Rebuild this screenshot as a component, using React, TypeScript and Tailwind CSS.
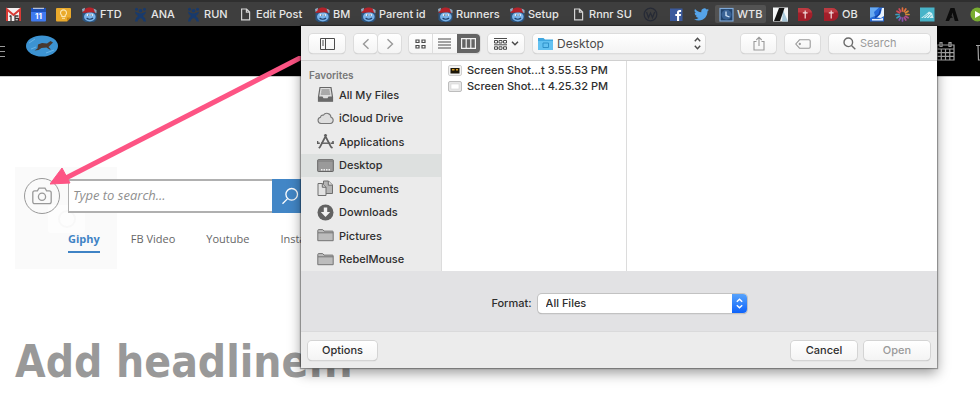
import type { ReactNode } from "react";

type Bookmark = {
    id: string;
    label?: string;
    width: string;
    icon: ReactNode;
};

const MouseIcon = () => (
    <svg width="15" height="15" viewBox="0 0 15 15">
        <path d="M.5 5.500h14v7L12 15H3.500l-3-2z" fill="#2c5580" />
        <ellipse cx="7.800" cy="9.800" rx="5.800" ry="4.600" fill="#79b3ea" />
        <path d="M.5 6C1.500 2 5 .3 8.500.5c3 .2 5 2 5.700 5.500L10 5.200 5 5.600z" fill="#b4232b" />
        <path d="M0 2L3 .8 2.500 3.500.5 5zM11.500 1.500l3 1.500V6l-1.500-.5z" fill="#8fa9bf" />
        <ellipse cx="6" cy="7.900" rx="1.300" ry="1.200" fill="#e6f1fc" />
        <ellipse cx="9.700" cy="7.900" rx="1.300" ry="1.200" fill="#e6f1fc" />
        <circle cx="6.500" cy="8" r="0.600" fill="#16263c" />
        <circle cx="9.300" cy="8" r="0.600" fill="#16263c" />
        <path d="M4.600 11c1.500 1.600 4.800 1.600 6.400 0" stroke="#1d3d68" strokeWidth="1.100" fill="none" />
    </svg>
);

const JiraIcon = () => (
    <svg width="15" height="15" viewBox="0 0 15 15" fill="#183a6c">
        <circle cx="3.500" cy="2.300" r="1.500" />
        <circle cx="11.500" cy="2.300" r="1.500" />
        <circle cx="7.500" cy="3.800" r="1.800" />
        <path d="M2 4.500c2 .8 3.500 2 5.500 2s3.500-1.200 5.500-2c-.2 2.500-1.600 3.600-3.300 4.600 1.600 1 3 2.400 3.300 5.400h-2.500c-.3-2-1.500-3-3-3.500-1.500.5-2.700 1.500-3 3.500H2c.3-3 1.700-4.400 3.300-5.400C3.600 8.100 2.200 7 2 4.500z" />
    </svg>
);

const PageIcon = () => (
    <svg width="15" height="15" viewBox="0 0 15 15" fill="none" stroke="#d4d4d4" strokeWidth="1.200">
        <path d="M3.600 2h5l3 3v7.900h-8zM8.400 2v3.200h3.200" />
    </svg>
);

const RedIcon = () => (
    <svg width="15" height="15" viewBox="0 0 15 15">
        <path d="M0 1h8a6.500 6.500 0 0 1 0 13H0z" fill="#a31f2a" />
        <path d="M0 1h8a6.500 6.500 0 0 1 6 4.500H0z" fill="#bb3a41" />
        <path d="M7.200 3.500v8M4.800 5.800h4.800" stroke="#f2dcdc" strokeWidth="1.200" />
    </svg>
);

const bookmarks: Bookmark[] = [
    {
        id: "Gmail",
        width: "w-[25px]",
        icon: (
            <svg width="15" height="15" viewBox="0 0 15 15">
                <rect y="1" width="15" height="13" rx="1" fill="#f4f0f0" />
                <path d="M1 14V2.500L7.500 8 14 2.500V14" fill="none" stroke="#d93a35" strokeWidth="2" />
                <path d="M5 8.500v6M5 8.500l-1.500 1M12.500 9H9v5h3.500v-2.500H9" stroke="#3b3333" strokeWidth="1.300" fill="none" />
            </svg>
        ),
    },
    {
        id: "Calendar",
        width: "w-[25px]",
        icon: (
            <svg width="15" height="15" viewBox="0 0 15 15">
                <rect y="1" width="15" height="13.500" rx="1" fill="#3f7af0" />
                <rect y="1" width="15" height="4" fill="#1d50b8" />
                <path d="M2 1.300h11" stroke="#d9dde5" strokeWidth="1" />
                <text x="7.500" y="12" textAnchor="middle" fontSize="8" fontWeight="700" fontFamily="Inter, sans-serif" fill="#fff">11</text>
            </svg>
        ),
    },
    {
        id: "Keep",
        width: "w-[26px]",
        icon: (
            <svg width="15" height="15" viewBox="0 0 15 15">
                <path d="M1 1h13a1 1 0 0 1 1 1v8.500L11 14.500H1a1 1 0 0 1-1-1V2a1 1 0 0 1 1-1z" fill="#eaaa2c" />
                <path d="M15 10.500h-4v4z" fill="#c98514" />
                <path d="M5.800 9.500V8.300a3 3 0 1 1 3.400 0v1.200zM6 11.200h3" fill="none" stroke="#fbe6b4" strokeWidth="1.100" />
            </svg>
        ),
    },
    { id: "ftd", label: "FTD", width: "w-[51px]", icon: <MouseIcon /> },
    { id: "ana", label: "ANA", width: "w-[53px]", icon: <JiraIcon /> },
    { id: "run", label: "RUN", width: "w-[52px]", icon: <JiraIcon /> },
    { id: "edit", label: "Edit Post", width: "w-[77px]", icon: <PageIcon /> },
    { id: "bm", label: "BM", width: "w-[46px]", icon: <MouseIcon /> },
    { id: "parent", label: "Parent id", width: "w-[77px]", icon: <MouseIcon /> },
    { id: "runners", label: "Runners", width: "w-[72px]", icon: <MouseIcon /> },
    { id: "setup", label: "Setup", width: "w-[61px]", icon: <MouseIcon /> },
    { id: "rnnr", label: "Rnnr SU", width: "w-[72px]", icon: <PageIcon /> },
    {
        id: "Workplace",
        width: "w-[26px]",
        icon: (
            <svg width="15" height="15" viewBox="0 0 15 15" fill="none" stroke="#272b36" strokeWidth="1.300">
                <circle cx="7.500" cy="7.500" r="6.300" />
                <path d="M3.500 5l2 5.500 2-4.500 2 4.500 2.200-5.500" />
            </svg>
        ),
    },
    {
        id: "Facebook",
        width: "w-[25px]",
        icon: (
            <svg width="15" height="15" viewBox="0 0 15 15">
                <rect x="1" y="1.500" width="12.500" height="12.500" fill="#3b5a9d" />
                <path d="M8 14V9H6.300V7H8V5.600C8 4 9 3.100 10.500 3.100h1.600v1.900h-1.100c-.7 0-.9.4-.9.900V7h2l-.3 2h-1.700v5z" fill="#fff" />
            </svg>
        ),
    },
    {
        id: "Twitter",
        width: "w-[21px]",
        icon: (
            <svg width="15" height="15" viewBox="0 0 24 24" fill="#55a4ea">
                <path d="M23.950 4.570a10 10 0 0 1-2.820.770 4.960 4.960 0 0 0 2.160-2.720c-.950.560-2 .960-3.130 1.190a4.920 4.920 0 0 0-8.380 4.480C7.690 8.100 4.070 6.130 1.640 3.160a4.920 4.920 0 0 0 1.520 6.570 4.900 4.900 0 0 1-2.230-.610v.060a4.920 4.920 0 0 0 3.950 4.830 5 5 0 0 1-2.210.080 4.940 4.940 0 0 0 4.600 3.420A9.870 9.870 0 0 1 0 19.540a14 14 0 0 0 7.550 2.210c9.050 0 14-7.500 14-13.980 0-.210 0-.420-.020-.630a9.940 9.940 0 0 0 2.420-2.570z" />
            </svg>
        ),
    },
    {
        id: "wtb",
        label: "WTB",
        width: "w-[51px] mr-[7px] bg-[#535353] rounded-xs pl-1",
        icon: (
            <svg width="15" height="15" viewBox="0 0 15 15">
                <rect x="1" y="1.500" width="13" height="12.500" fill="#21436c" stroke="#7fa9d8" strokeWidth="1.200" />
                <circle cx="7.500" cy="7.800" r="5" fill="#3a6396" />
                <path d="M7 4.500v4l3.500 1.500" fill="none" stroke="#d4e6f8" strokeWidth="1.300" />
            </svg>
        ),
    },
    {
        id: "Analytics",
        width: "w-[25px]",
        icon: (
            <svg width="15" height="15" viewBox="0 0 15 15">
                <rect y="0.500" width="15" height="14" fill="#f4f6f7" />
                <path d="M10 3l5 11.500H9z" fill="#a9c9da" />
                <path d="M6 1h5.500L7 14H1z" fill="#141414" />
            </svg>
        ),
    },
    { id: "Red", width: "w-[26px]", icon: <RedIcon /> },
    { id: "ob", label: "OB", width: "w-[46px]", icon: <RedIcon /> },
    {
        id: "Blue",
        width: "w-[25px]",
        icon: (
            <svg width="15" height="15" viewBox="0 0 15 15">
                <rect y="0.500" width="14" height="14" fill="#2569d8" />
                <path d="M0 .5h9L4 5 5 9 0 11z" fill="#68a9f0" />
                <path d="M12 1h2v8l-3 2-4-.5L10.500 7zM2 12h7l4-1v2.500H2z" fill="#eaf3fd" />
                <path d="M10.500 2.500l-1.500 5-4 3" fill="none" stroke="#123f9d" strokeWidth="1.200" />
            </svg>
        ),
    },
    {
        id: "Burst",
        width: "w-[25px]",
        icon: (
            <svg width="15" height="15" viewBox="0 0 15 15" strokeWidth="1.700" strokeLinecap="round">
                <path d="M7.500 4V1M9.300 4.500L10.800 2" stroke="#e4703c" />
                <path d="M10.500 5.800L13 4.200M11 7.500h3" stroke="#d98a35" />
                <path d="M10.500 9.300l2.600 1.500M9.300 10.500l1.500 2.500" stroke="#b04a8c" />
                <path d="M7.500 11v3M5.700 10.500L4.200 13" stroke="#8655b0" />
                <path d="M4.500 9.300L2 10.800M4 7.500H1" stroke="#3c9dc0" />
                <path d="M4.500 5.800L2 4.200M5.700 4.500L4.200 2" stroke="#d04b5a" />
            </svg>
        ),
    },
    {
        id: "Teal",
        width: "w-[25px]",
        icon: (
            <svg width="15" height="15" viewBox="0 0 15 15">
                <rect y="0.500" width="14.500" height="14" fill="#48b4c9" />
                <path d="M1 11l4-3 4-3.500 3 1.500 1.500 5z" fill="#cdeef3" />
                <path d="M3 11l5-4M6 11l4-4M9 11l2.500-3" stroke="#48b4c9" strokeWidth="0.800" />
            </svg>
        ),
    },
    {
        id: "Black",
        width: "w-[25px]",
        icon: (
            <svg width="15" height="15" viewBox="0 0 15 15" fill="#0c0c0c">
                <path d="M0.500 14L5.500 1h4L13.500 14H9.800L7.500 5.500 6.500 9l1.500 1.500-2.500.5L4 14z" />
            </svg>
        ),
    },
    {
        id: "Play",
        width: "w-[15px]",
        icon: (
            <svg width="15" height="15" viewBox="0 0 15 15">
                <circle cx="7.500" cy="7.500" r="7" fill="#79ad31" />
                <path d="M5 4l6.500 3.500L5 11z" fill="#fff" />
            </svg>
        ),
    },
];

const FolderIcon = () => (
    <svg width="17" height="17" viewBox="0 0 17 17">
        <path d="M.8 3.500c0-.6.300-.9.900-.9h4l1.300 1.500h8.400c.5 0 .8.300.8.800v8.800H.8z" fill="#bcbcbc" stroke="#747474" />
        <path d="M1 5.800h15" stroke="#747474" />
    </svg>
);

const places = [
    {
        name: "All My Files",
        icon: (
            <svg width="17" height="17" viewBox="0 0 17 17">
                <path d="M3 1.500h11l1.500 9.500v4.200h-14V11z" fill="#ddd" stroke="#666" strokeWidth="1.200" />
                <path d="M4.500 4h8M4.200 6h8.600M3.800 8h9.400" stroke="#777" />
                <path d="M1.500 10.500h4l1 1.800h4l1-1.800h4v4.700h-14z" fill="#6a6a6a" />
            </svg>
        ),
    },
    {
        name: "iCloud Drive",
        icon: (
            <svg width="17" height="17" viewBox="0 0 17 17">
                <path d="M4 13.500a3.200 3.200 0 0 1-.5-6.300 2.300 2.300 0 0 1 2.800-2A4.200 4.200 0 0 1 14 7.300a3.200 3.200 0 0 1-.6 6.200z" fill="#dedede" stroke="#777" strokeWidth="1.100" />
            </svg>
        ),
    },
    {
        name: "Applications",
        icon: (
            <svg width="17" height="17" viewBox="0 0 17 17" fill="none" stroke="#5f5f5f">
                <path d="M9.500 1.500L3 14l-1.200 1.200M7.500 1.500L14 14l1.500 1" strokeWidth="1.700" />
                <path d="M4 10.200h9" strokeWidth="1.400" />
                <path d="M.5 8v3M16 8v3" strokeWidth="1.600" />
                <path d="M.8 10.200h2M13.500 10.200h3" strokeWidth="1.400" />
            </svg>
        ),
    },
    {
        name: "Desktop",
        active: true,
        icon: (
            <svg width="17" height="17" viewBox="0 0 17 17">
                <rect x="0.700" y="2.700" width="15.600" height="11.800" rx="0.600" fill="#9a9a9a" stroke="#646464" />
                <path d="M1 4.200h15" stroke="#7d7d7d" strokeWidth="0.800" />
                <path d="M4 12.800h9" stroke="#efefef" strokeWidth="1.400" strokeDasharray="1.500 1" />
            </svg>
        ),
    },
    {
        name: "Documents",
        icon: (
            <svg width="17" height="17" viewBox="0 0 17 17" stroke="#6f6f6f">
                <path d="M6.500 1h5l4 4v8.500h-9z" fill="#b5b5b5" />
                <path d="M11.300 1v4.200h4.200" fill="#ddd" />
                <path d="M1 3.500h4.500L9 7v8.500H1z" fill="#e2e2e2" />
                <path d="M5.300 3.500v3.800H9" fill="#c4c4c4" />
            </svg>
        ),
    },
    {
        name: "Downloads",
        icon: (
            <svg width="17" height="17" viewBox="0 0 17 17">
                <circle cx="8.500" cy="8.500" r="8" fill="#626262" />
                <path d="M6.800 3.500h3.400V8h3L8.500 13 3.800 8h3z" fill="#f2f2f2" />
            </svg>
        ),
    },
    { name: "Pictures", icon: <FolderIcon /> },
    { name: "RebelMouse", icon: <FolderIcon /> },
];

const files = [
    {
        name: "Screen Shot...t 3.55.53 PM",
        icon: (
            <svg width="14" height="11" viewBox="0 0 14 11">
                <rect x="0.500" y="0.500" width="13" height="10" rx="1.500" fill="#f3f3f3" stroke="#cfcfcf" />
                <rect x="2.500" y="3" width="9" height="5.500" fill="#1d1708" />
                <path d="M4 4.800h2.500M8 4.800h2" stroke="#d59b22" strokeWidth="1.400" />
            </svg>
        ),
    },
    {
        name: "Screen Shot...t 4.25.32 PM",
        icon: (
            <svg width="14" height="11" viewBox="0 0 14 11">
                <rect x="0.500" y="0.500" width="13" height="10" rx="1.500" fill="#e6e6e6" stroke="#bdbdbd" />
                <rect x="3" y="3" width="8" height="5" fill="#fff" stroke="#d5d5d5" strokeWidth="0.600" />
            </svg>
        ),
    },
];

const tabs = ["Giphy", "FB Video", "Youtube", "Instagram"];

const toolButton =
    "flex h-[19px] items-center justify-center rounded bg-linear-to-b from-white to-[#f4f4f4] shadow-[0_0_0_1px_#dcdcdc,0_1px_1px_#b5b5b5]";
const dialogButton =
    "h-[19px] rounded bg-linear-to-b from-white to-[#f4f4f4] text-[11px] leading-4 font-medium shadow-[0_0_0_1px_#d4d4d4,0_1px_1px_#aaa]";

function BookmarksBar() {
    return (
        <nav className="flex h-[26px] items-center overflow-hidden border-t-2 border-[#2f2f2f] bg-[#3e3e3e] pl-[6px]" aria-label="Bookmarks">
            {bookmarks.map((b) => (
                <a
                    key={b.id}
                    href="#"
                    aria-label={b.label ?? b.id}
                    className={`flex h-[18px] shrink-0 items-center gap-[3px] text-[11px] font-medium whitespace-nowrap text-[#e6e6e6] ${b.width}`}
                >
                    <span className="shrink-0">{b.icon}</span>
                    {b.label}
                </a>
            ))}
        </nav>
    );
}

function SiteHeader() {
    return (
        <header className="flex h-[50px] items-center overflow-hidden bg-black">
            <button aria-label="Menu" className="flex w-[26px] flex-col gap-1">
                <span className="h-px w-[5px] bg-[#9a9a9a]" />
                <span className="h-px w-[5px] bg-[#9a9a9a]" />
                <span className="h-px w-[5px] bg-[#9a9a9a]" />
            </button>
            <a href="#" aria-label="Home" className="mb-2.5">
                <svg width="32" height="22" viewBox="0 0 32 22">
                    <ellipse cx="16" cy="11" rx="16" ry="10.500" fill="#3c93d2" />
                    <path d="M3 8l6-4M5 14l5-2M20 18l8-3" stroke="#68b3e5" strokeWidth="1" />
                    <path d="M8.500 15.500l3-2 .5-4 4-1.500 5 .5 3.500-2.500 2.500 1.500-2.500 2.500-2 2 2.500 2.500h-1.500l-3-2-5 .5-3 2z" fill="#49382f" />
                </svg>
            </a>
            <div className="ml-auto flex gap-5">
                <button aria-label="Schedule">
                    <svg width="20" height="20" viewBox="0 0 20 20" fill="none" stroke="#a3a3a3" strokeWidth="1.200">
                        <path d="M1 4h17v15H1zM1 8h17M1 11.700h17M1 15.300h17M5.300 8v11M9.500 8v11M13.800 8v11" />
                        <path d="M4 1.500h2v4H4zM13 1.500h2v4h-2z" fill="#222" />
                    </svg>
                </button>
                <button aria-label="Delete" className="-mr-4">
                    <svg width="20" height="20" viewBox="0 0 20 20" fill="none" stroke="#a3a3a3" strokeWidth="1.200">
                        <path d="M0 4.500h18M2 4.500L2.500 19h11l1-14.500M5 4.500V2h6v2.500" />
                    </svg>
                </button>
            </div>
        </header>
    );
}

function Editor() {
    return (
        <main className="relative border-t border-[#ccc] pt-[101px] pb-8 pl-6">
            {/* ghost left behind by the drop area */}
            <div className="absolute top-[90px] left-[15px] h-[102px] w-[102px] bg-[#fafafa]">
                <svg width="102" height="102" viewBox="0 0 102 102">
                    <rect x="33" y="38" width="37" height="28" rx="3" fill="#fdfdfd" />
                    <circle cx="52" cy="52" r="8" fill="none" stroke="#f8f8f8" strokeWidth="2" />
                </svg>
            </div>
            <form className="relative flex items-center gap-2">
                <button type="button" aria-label="Upload image" className="flex size-9 items-center justify-center rounded-full border border-[#999]">
                    <svg width="20" height="18" viewBox="0 0 20 18" fill="none" stroke="#999" strokeWidth="1.300">
                        <path d="M2.800 3.800h2.600L7 1.200h6l1.600 2.600h2.600c1.200 0 2 .8 2 2v9c0 1.100-.8 1.900-2 1.900H2.800c-1.200 0-2-.8-2-1.900v-9c0-1.200.8-2 2-2z" />
                        <circle cx="10" cy="9.700" r="3.600" />
                    </svg>
                </button>
                <div className="flex h-[34px]">
                    <input
                        type="text"
                        aria-label="Type to search"
                        placeholder="Type to search..."
                        className="w-[204px] border-y-2 border-l border-[#b0b0b0] bg-white pl-1 font-['Open_Sans',sans-serif] text-[13px] text-[#555] italic outline-none placeholder:text-[#8f8f8f]"
                    />
                    <button type="button" aria-label="Search" className="flex w-9 items-center justify-center bg-[#4286c6]">
                        <svg width="18" height="18" viewBox="0 0 18 18" fill="none" stroke="#fff" strokeWidth="1.300">
                            <circle cx="10.700" cy="7.300" r="5.800" />
                            <path d="M6.600 11.600L1.500 16.800" />
                        </svg>
                    </button>
                </div>
            </form>
            <nav className="relative mt-4 ml-11 flex gap-[31px] font-['Open_Sans',sans-serif] text-[11px] leading-[18px]">
                {tabs.map((tab) => (
                    <a
                        key={tab}
                        href="#"
                        className={tab === "Giphy" ? "border-b-2 border-[#3f83c5] pb-[3px] font-bold text-[#3f83c5]" : "text-[#666]"}
                    >
                        {tab}
                    </a>
                ))}
            </nav>
            <h1 className="mt-[77px] -ml-[9px] font-['DejaVu_Sans_Condensed','DejaVu_Sans',sans-serif] text-[44px] leading-[64px] font-bold text-[#999]">
                Add headline...
            </h1>
            <svg className="absolute top-[-21px] left-[50px]" width="252" height="130" viewBox="0 0 252 130">
                <path d="M252 1L14 123" stroke="#fd5484" strokeWidth="5" />
                <path d="M0 128L12 112l8 15z" fill="#fd5484" stroke="#fd5484" />
            </svg>
        </main>
    );
}

function DialogToolbar() {
    return (
        <div className="flex h-[35px] items-center border-b border-[#d0d0d0] bg-[#ececec] pt-px pr-[7px] pl-2 text-[#4b4b4b]">
            <button aria-label="Toggle sidebar" className={`${toolButton} w-9`}>
                <svg width="15" height="12" viewBox="0 0 15 12" fill="none" stroke="currentColor">
                    <path d="M.5.500h14v11H.5zM5.500.5v11M2 3h2M2 5h2M2 7h2" />
                </svg>
            </button>
            <div className="ml-[9px] flex gap-px">
                <button aria-label="Back" className={`${toolButton} w-[23px]`}>
                    <svg width="8" height="12" viewBox="0 0 8 12" fill="none" stroke="#999" strokeWidth="1.400">
                        <path d="M6.500 1.200L1.500 6l5 4.800" />
                    </svg>
                </button>
                <button aria-label="Forward" className={`${toolButton} w-[23px]`}>
                    <svg width="8" height="12" viewBox="0 0 8 12" fill="none" stroke="#999" strokeWidth="1.400">
                        <path d="M1.500 1.200l5 4.800-5 4.800" />
                    </svg>
                </button>
            </div>
            <div className={`${toolButton} ml-2 w-[71px] overflow-hidden`}>
                <button aria-label="Icon view" className="flex h-full flex-1 items-center justify-center">
                    <svg width="11" height="10" viewBox="0 0 11 10" fill="none" stroke="currentColor" strokeWidth="1.200">
                        <path d="M1 1h3v2.500H1zM7 1h3v2.500H7zM1 6.500h3V9H1zM7 6.500h3V9H7z" />
                    </svg>
                </button>
                <button aria-label="List view" className="flex h-full flex-1 items-center justify-center border-l border-[#ddd]">
                    <svg width="13" height="11" viewBox="0 0 13 11" stroke="currentColor">
                        <path d="M0 1h13M0 4h13M0 7h13M0 10h13" />
                    </svg>
                </button>
                <button aria-label="Column view" className="flex h-full flex-1 items-center justify-center bg-[#646464]">
                    <svg width="15" height="11" viewBox="0 0 15 11" fill="none" stroke="#f2f2f2" strokeWidth="1.200">
                        <path d="M.6.6h13.800v9.800H.6zM5.200.6v9.800M9.800.6v9.800" />
                    </svg>
                </button>
            </div>
            <button aria-label="Arrange" className={`${toolButton} ml-2 w-9 gap-1`}>
                <svg width="13" height="12" viewBox="0 0 13 12" fill="none" stroke="currentColor">
                    <path d="M0 .5h13M.5 2.500h3v2.500h-3zM5 2.500h3v2.500H5zM9.500 2.500h3v2.500h-3zM0 6.800h13M.5 8.800h3v2.500h-3zM5 8.800h3v2.500H5zM9.500 8.800h3v2.500h-3z" />
                </svg>
                <svg width="8" height="5" viewBox="0 0 8 5" fill="none" stroke="currentColor" strokeWidth="1.500">
                    <path d="M1 .8l3 3 3-3" />
                </svg>
            </button>
            <div className={`${toolButton} ml-[9px] w-[172px] pr-1 pl-[5px]`}>
                <svg width="15" height="13" viewBox="0 0 15 13">
                    <path d="M0 1h5.500L7 2.500h8V13H0z" fill="#3fa7e0" />
                    <path d="M0 4h15v9H0z" fill="#62c1f1" />
                    <path d="M5 6h5.500v4.500H5z" fill="none" stroke="#2f91c9" />
                </svg>
                <select aria-label="Folder" className="ml-1 min-w-0 flex-1 appearance-none bg-transparent text-xs leading-4 outline-none">
                    <option>Desktop</option>
                </select>
                <svg width="7" height="13" viewBox="0 0 7 13" fill="none" stroke="currentColor" strokeWidth="1.400">
                    <path d="M.8 4.300l2.700-3 2.700 3M.8 8.700l2.700 3 2.700-3" />
                </svg>
            </div>
            <div className="ml-auto flex gap-[9px]">
                <button aria-label="Share" className={`${toolButton} w-[35px]`}>
                    <svg width="12" height="15" viewBox="0 0 12 15" fill="none" stroke="#999" strokeWidth="1.100">
                        <path d="M3.500 5.500h-2.500v8.500h10V5.500H8.500M6 10V1.500M3.300 4L6 1.200 8.700 4" />
                    </svg>
                </button>
                <button aria-label="Tags" className={`${toolButton} w-[35px]`}>
                    <svg width="16" height="10" viewBox="0 0 16 10" fill="none" stroke="#999" strokeWidth="1.100">
                        <path d="M4.500.8H14c.8 0 1.200.4 1.200 1.200v6c0 .8-.4 1.200-1.200 1.200H4.500L.8 5z" />
                        <circle cx="4.800" cy="5" r="0.600" />
                    </svg>
                </button>
                <label className={`${toolButton} w-[101px] gap-1 pl-[14px]`}>
                    <svg width="13" height="13" viewBox="0 0 13 13" fill="none" stroke="#6a6a6a" strokeWidth="1.400">
                        <circle cx="5.300" cy="5.300" r="4.300" />
                        <path d="M8.500 8.500l3.800 3.800" />
                    </svg>
                    <input type="search" aria-label="Search files" placeholder="Search" className="min-w-0 flex-1 bg-transparent text-[11px] outline-none placeholder:text-[#9a9a9a]" />
                </label>
            </div>
        </div>
    );
}

function OpenDialog() {
    return (
        <section
            role="dialog"
            aria-label="Open file"
            className="absolute top-[26px] right-[43px] left-[301px] bg-[#ececec] text-[#2e2e2e] shadow-[0_0_1px_1px_rgba(0,0,0,0.3),0_5px_12px_rgba(0,0,0,0.4)]"
        >
            <DialogToolbar />
            <div className="flex">
                <aside className="w-[140px] bg-[#ebebeb] text-[11px] font-medium">
                    <h2 className="h-[22px] pt-[6px] pl-2 text-[10px] leading-4 font-semibold text-[#777]">Favorites</h2>
                    <ul className="flex h-[188px] flex-col">
                        {places.map((p) => (
                            <li key={p.name} className={`flex flex-1 items-center gap-[5px] pl-4 ${p.active ? "bg-[#dde0df]" : ""}`}>
                                {p.icon}
                                <a href="#">{p.name}</a>
                            </li>
                        ))}
                    </ul>
                </aside>
                <ul className="w-[186px] border-x border-[#dcdcdc] bg-white pt-px pl-[6px] text-[11px] leading-4 font-medium">
                    {files.map((f) => (
                        <li key={f.name} className="flex h-4 items-center gap-[5px] whitespace-nowrap">
                            {f.icon}
                            {f.name}
                        </li>
                    ))}
                </ul>
                <div className="flex-1 bg-white" />
            </div>
            <div className="flex h-[61px] items-center justify-center gap-[6px] border-b border-[#dadadb] bg-[#e2e2e4] pt-[5px] text-[11px] font-medium">
                <label htmlFor="format">Format:</label>
                <div className="flex h-[19px] w-[209px] overflow-hidden rounded bg-white shadow-[0_0_0_1px_#c2c2c2,0_1px_1px_#999]">
                    <select id="format" className="flex-1 appearance-none pl-2 outline-none">
                        <option>All Files</option>
                    </select>
                    <span className="flex w-[15px] items-center justify-center bg-linear-to-b from-[#56a2fb] to-[#0d62fa]">
                        <svg width="7" height="11" viewBox="0 0 7 11" fill="none" stroke="#fff" strokeWidth="1.400">
                            <path d="M.8 3.800l2.700-2.600 2.700 2.600M.8 7.200l2.700 2.600 2.700-2.600" />
                        </svg>
                    </span>
                </div>
            </div>
            <div className="flex h-[36px] items-center gap-[7px] px-[7px]">
                <button className={`${dialogButton} mr-auto w-[69px]`}>Options</button>
                <button className={`${dialogButton} w-[66px]`}>Cancel</button>
                <button disabled className={`${dialogButton} w-[66px] text-[#9a9a9a]`}>Open</button>
            </div>
        </section>
    );
}

export default function App() {
    return (
        <div className="relative overflow-hidden bg-white font-[Inter,sans-serif]">
            <BookmarksBar />
            <SiteHeader />
            <Editor />
            <OpenDialog />
        </div>
    );
}
